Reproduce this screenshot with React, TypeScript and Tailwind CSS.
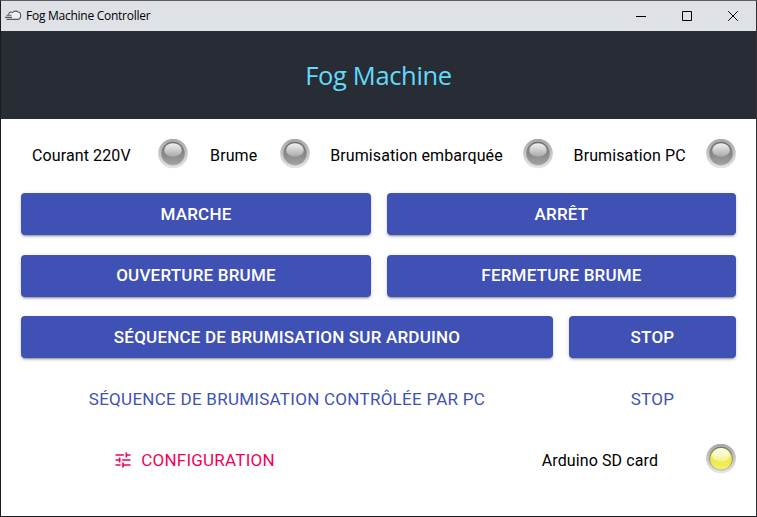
import React from "react";

function Lamp({ on = false, id }: { on?: boolean; id: string }) {
  return (
    <svg className="block h-[30px] w-[30px] shrink-0" viewBox="0 0 30 30">
      <defs>
        <linearGradient id={id + "-rim"} x1="0" y1="0" x2="0" y2="1">
          <stop offset="0" stopColor="#a6a6a6" />
          <stop offset="1" stopColor="#e6e6e6" />
        </linearGradient>
        <linearGradient id={id + "-ring"} x1="0" y1="0" x2="0" y2="1">
          <stop offset="0" stopColor={on ? "#77775c" : "#6c6c6c"} />
          <stop offset="1" stopColor={on ? "#b5b5a8" : "#b4b4b4"} />
        </linearGradient>
        <linearGradient id={id + "-body"} x1="0" y1="0" x2="0" y2="1">
          <stop offset="0" stopColor={on ? "#efed74" : "#747474"} />
          <stop offset="0.6" stopColor={on ? "#eeea45" : "#8c8c8c"} />
          <stop offset="1" stopColor={on ? "#f4f170" : "#a2a2a2"} />
        </linearGradient>
        <linearGradient id={id + "-shine"} x1="0" y1="0" x2="0" y2="1">
          <stop offset="0" stopColor={on ? "#fffff2" : "#f2f2f2"} />
          <stop offset="1" stopColor={on ? "#f3f08a" : "#a8a8a8"} />
        </linearGradient>
      </defs>
      <circle cx="15" cy="14.5" r="14.8" fill={`url(#${id}-rim)`} />
      <circle cx="15" cy="14.6" r="11.9" fill={`url(#${id}-ring)`} />
      <circle cx="15" cy="14.8" r="10.8" fill={`url(#${id}-body)`} />
      <ellipse cx="15" cy="11" rx="8.8" ry="6.8" fill={`url(#${id}-shine)`} />
    </svg>
  );
}

function Label({ className, children }: { className: string; children: React.ReactNode }) {
  return <span className={"whitespace-nowrap text-center text-base leading-6 tracking-[0.1px] text-black " + className}>{children}</span>;
}

function Button({ className, children }: { className: string; children: React.ReactNode }) {
  return (
    <button className={"flex h-[42px] items-center justify-center whitespace-nowrap rounded-[4px] text-[17px] leading-none " + className}>
      {children}
    </button>
  );
}

const filled =
  "bg-[#3f51b5] font-medium text-white tracking-[0.2px] shadow-[0px_3px_1px_-2px_rgba(0,0,0,0.2),0px_2px_2px_0px_rgba(0,0,0,0.14),0px_1px_5px_0px_rgba(0,0,0,0.12)]";

export default function App() {
  return (
    <div className="flex h-[517px] w-[757px] flex-col overflow-hidden border border-[#1b1c20] border-t-[#5c5d62] border-r-[#303136] bg-white font-[Roboto,sans-serif]">
      <div className="flex h-[30px] shrink-0 items-center bg-[#dee1e6] text-black">
        <svg className="ml-[4px] h-[12px] w-[17px]" viewBox="0 0 17 12" fill="none" stroke="#555a60" strokeWidth="1.1">
          <path d="M4.5 4.5C4.5 2.5 6.5 1.5 8 2.5C9.5 .8 12 .7 13 2C17 1.7 17.3 8.8 13 9.4H7L5 6.5" fill="#eceef0" stroke="none" />
          <path d="M3.5 4.5C4 2.3 6 1.5 7.5 2.5C9 .8 12 .7 13 2C16.6 2.2 16.6 8.8 13 9.4H1.5M1.5 5.3H6.5M0 7.4H7" />
        </svg>
        <span className="ml-[4px] whitespace-nowrap font-['Open_Sans',sans-serif] text-[12px] leading-4 tracking-[-0.26px]">Fog Machine Controller</span>
        <svg className="ml-auto mr-[17px] h-[12px] w-[103px]" viewBox="0 0 103 12" fill="none" stroke="#000" strokeWidth="1">
          <path d="M0 6.5H10" />
          <path d="M46.5 1.5H55.5V10.5H46.5Z" />
          <path d="M92.2 1.2L101.8 10.8M101.8 1.2L92.2 10.8" />
        </svg>
      </div>
      <header className="flex h-[88px] shrink-0 items-center justify-center bg-[#282c34] pt-[2px]">
        <h1 className="whitespace-nowrap font-['Open_Sans',sans-serif] text-[25.5px] leading-none tracking-[-0.35px] text-[#61dafb]">Fog Machine</h1>
      </header>
      <main className="flex flex-col px-[20px] pt-[20px]">
        <div className="flex h-[34px] items-start">
          <Label className="mt-[5px] w-[121px]">Courant 220V</Label>
          <div className="ml-4"><Lamp id="power" /></div>
          <Label className="mt-[5px] w-[92px]">Brume</Label>
          <Lamp id="fog" />
          <Label className="mt-[5px] w-[214px]">Brumisation embarquée</Label>
          <Lamp id="board" />
          <Label className="mt-[5px] w-[153px]">Brumisation PC</Label>
          <Lamp id="pc" />
        </div>
        <div className="mt-[20px] flex gap-4">
          <Button className={"w-[350px] " + filled}>MARCHE</Button>
          <Button className={"w-[349px] " + filled}>ARRÊT</Button>
        </div>
        <div className="mt-[20px] flex gap-4">
          <Button className={"w-[350px] pb-px " + filled}>OUVERTURE BRUME</Button>
          <Button className={"w-[349px] pb-px " + filled}>FERMETURE BRUME</Button>
        </div>
        <div className="mt-[19px] flex gap-4">
          <Button className={"w-[532px] " + filled}>SÉQUENCE DE BRUMISATION SUR ARDUINO</Button>
          <Button className={"w-[167px] " + filled}>STOP</Button>
        </div>
        <div className="mt-[20px] flex gap-4">
          <Button className="w-[532px] tracking-[0.27px] text-[#3f51b5]">SÉQUENCE DE BRUMISATION CONTRÔLÉE PAR PC</Button>
          <Button className="w-[167px] tracking-[0.27px] text-[#3f51b5]">STOP</Button>
        </div>
        <div className="mt-[19px] flex items-start">
          <Button className="w-[350px] pr-[4px] tracking-[0.23px] text-[#f50057]">
            <svg className="mr-[8px] h-[20px] w-[20px]" viewBox="0 0 24 24" fill="currentColor">
              <path d="M3 17v2h6v-2H3zM3 5v2h10V5H3zm10 16v-2h8v-2h-8v-2h-2v6h2zM7 9v2H3v2h4v2h2V9H7zm14 4v-2H11v2h10zm-6-4h2V7h4V5h-4V3h-2v6z" />
            </svg>
            CONFIGURATION
          </Button>
          <Label className="ml-auto mr-[48px] mt-[10px]">Arduino SD card</Label>
          <div className="mt-[5px]"><Lamp on id="sd" /></div>
        </div>
      </main>
    </div>
  );
}
